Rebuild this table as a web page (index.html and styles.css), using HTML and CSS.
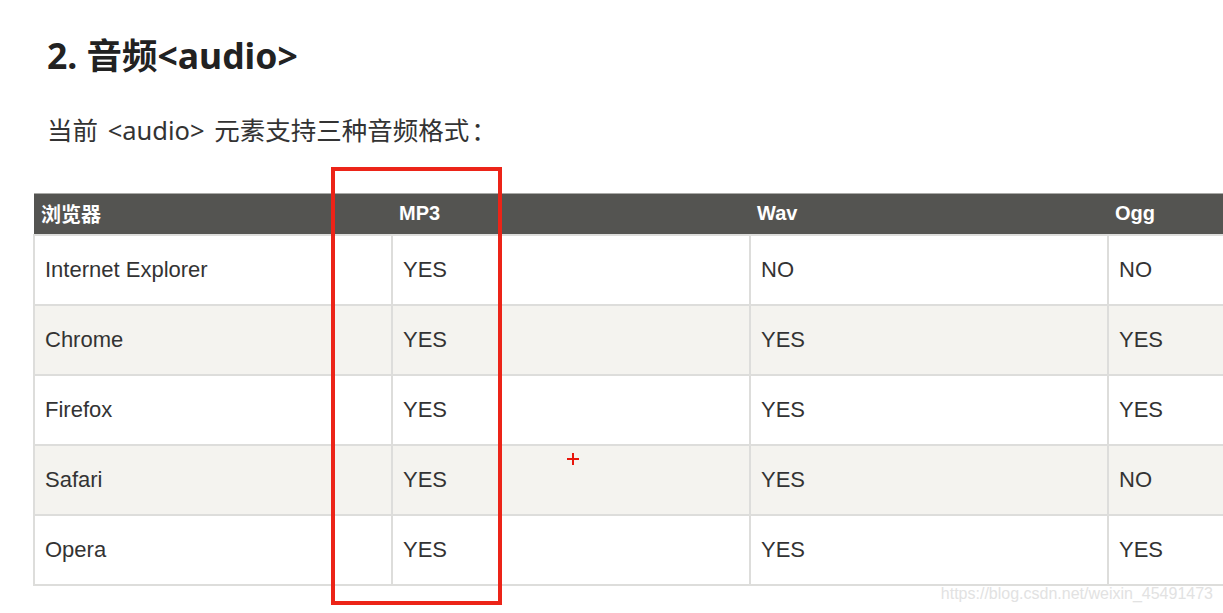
FILE: index.html
```html
<!DOCTYPE html>
<html lang="zh-CN">
<head>
<meta charset="utf-8">
<title>音频 audio</title>
<link rel="stylesheet" href="styles.css">
</head>
<body>
<div class="page">
  <h2 class="title">2. 音频&lt;audio&gt;</h2>
  <p class="intro">当前 &lt;audio&gt; 元素支持三种音频格式<span class="colon">：</span></p>
  <table class="grid">
    <colgroup>
      <col class="c"><col class="c"><col class="c"><col class="c">
    </colgroup>
    <thead>
      <tr><th>浏览器</th><th>MP3</th><th>Wav</th><th>Ogg</th></tr>
    </thead>
    <tbody>
      <tr><td>Internet Explorer</td><td>YES</td><td>NO</td><td>NO</td></tr>
      <tr class="alt"><td>Chrome</td><td>YES</td><td>YES</td><td>YES</td></tr>
      <tr><td>Firefox</td><td>YES</td><td>YES</td><td>YES</td></tr>
      <tr class="alt"><td>Safari</td><td>YES</td><td>YES</td><td>NO</td></tr>
      <tr><td>Opera</td><td>YES</td><td>YES</td><td>YES</td></tr>
    </tbody>
  </table>
  <div class="highlight"></div>
  <div class="cursor"></div>
  <div class="watermark">https://blog.csdn.net/weixin_45491473</div>
</div>
</body>
</html>
```

FILE: styles.css
```css
html, body {
  margin: 0;
  padding: 0;
  overflow: hidden;
  background: #fff;
}
.page {
  position: relative;
  width: 1223px;
  height: 613px;
  overflow: hidden;
  padding-top: 33px;
  box-sizing: border-box;
  font-family: "Liberation Sans", Arial, "Noto Sans CJK SC", sans-serif;
}
.title {
  margin: 0 0 0 47px;
  font-family: "Noto Sans", "Noto Sans CJK SC", sans-serif;
  font-weight: 700;
  font-size: 35.5px;
  line-height: 44px;
  color: #222;
}
.intro {
  margin: 34px 0 0 47px;
  height: 36px;
  font-family: "Noto Sans", "Noto Sans CJK SC", sans-serif;
  font-size: 25.5px;
  line-height: 36px;
  color: #333;
  word-spacing: 3px;
}
.intro .colon {
  font-family: "Noto Sans CJK JP", sans-serif;
  margin-left: 2px;
}
.grid {
  margin: 46px 0 0 33px;
  border-collapse: collapse;
  table-layout: fixed;
  width: 1434px;
}
.grid .c {
  width: 358px;
}
.grid th {
  height: 41px;
  padding: 0 7px;
  text-align: left;
  background: #545451;
  color: #fff;
  font-family: "Liberation Sans", Arial, "Noto Sans CJK SC", sans-serif;
  font-weight: 700;
  font-size: 20px;
  border-top: 1px solid #a9a9a6;
  box-sizing: border-box;
}
.grid td {
  height: 68px;
  padding: 0 10px;
  border: 2px solid #dddddb;
  color: #333;
  font-size: 22px;
  vertical-align: middle;
}
.grid tr.alt td {
  background: #f4f3ef;
}
.highlight {
  position: absolute;
  left: 331px;
  top: 167px;
  width: 171px;
  height: 438px;
  border: 4px solid #ec2418;
  box-sizing: border-box;
}
.cursor {
  position: absolute;
  left: 567px;
  top: 453px;
  width: 12px;
  height: 12px;
}
.cursor::before,
.cursor::after {
  content: "";
  position: absolute;
  background: #e8160c;
}
.cursor::before {
  left: 0;
  top: 5px;
  width: 12px;
  height: 2px;
}
.cursor::after {
  left: 5px;
  top: 0;
  width: 2px;
  height: 12px;
}
.watermark {
  position: absolute;
  right: 10px;
  top: 584px;
  font-family: "Liberation Sans", Arial, sans-serif;
  font-size: 16px;
  line-height: 20px;
  color: #e2e2e2;
}
```
